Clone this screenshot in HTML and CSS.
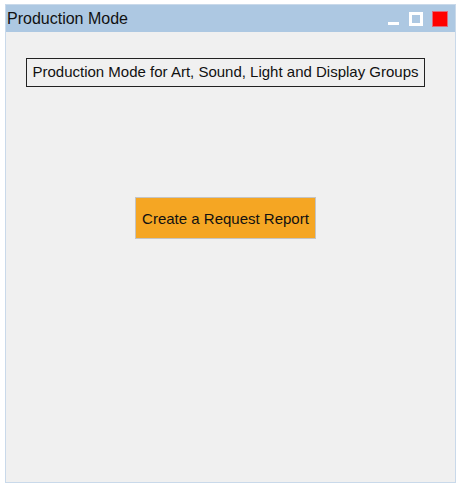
FILE: index.html
```html
<!DOCTYPE html>
<html>
<head>
<meta charset="utf-8">
<link rel="stylesheet" href="styles.css">
</head>
<body>
<div class="window">
  <div class="titlebar">
    <span class="title">Production Mode</span>
    <div class="controls">
      <span class="ctl-min"></span>
      <span class="ctl-max"></span>
      <span class="ctl-close"></span>
    </div>
  </div>
  <div class="content">
    <div class="label">Production Mode for Art, Sound, Light and Display Groups</div>
    <button class="report-btn">Create a Request Report</button>
  </div>
</div>
</body>
</html>
```
FILE: styles.css
```css
html, body {
  margin: 0;
  padding: 0;
  background: #ffffff;
  font-family: "Liberation Sans", Arial, sans-serif;
}
.window {
  box-sizing: border-box;
  margin: 4px 0 0 5px;
  width: 451px;
  height: 479px;
  border: 1px solid #c9d9ea;
  background: #f0f0f0;
  display: flex;
  flex-direction: column;
}
.titlebar {
  height: 27px;
  background: #adc8e2;
  display: flex;
  align-items: center;
  justify-content: space-between;
  padding: 0 7px 0 1px;
}
.title {
  font-size: 16px;
  color: #111;
  line-height: 27px;
}
.controls {
  display: flex;
  align-items: center;
  gap: 8px;
}
.ctl-min {
  width: 11px;
  height: 3px;
  background: #fff;
  margin-top: 10px;
}
.ctl-max {
  box-sizing: border-box;
  width: 14px;
  height: 14px;
  border: 3px solid #fff;
  background: #adc8e2;
  margin-left: 2px;
}
.ctl-close {
  box-sizing: border-box;
  width: 16px;
  height: 16px;
  background: #ff0000;
  border: 1px solid #e06a7a;
  margin-left: 1px;
}
.content {
  flex: 1;
  display: flex;
  flex-direction: column;
  align-items: center;
  padding: 26px 10px 0 0;
}
.label {
  box-sizing: border-box;
  width: 399px;
  height: 29px;
  border: 1px solid #222;
  font-size: 15px;
  line-height: 25px;
  text-align: center;
  color: #111;
}
.report-btn {
  box-sizing: border-box;
  margin-top: 110px;
  width: 181px;
  height: 42px;
  background: #f5a623;
  border: 1px solid #c4c4c4;
  font-family: "Liberation Sans", Arial, sans-serif;
  font-size: 15px;
  color: #111;
  padding: 0;
}
```
